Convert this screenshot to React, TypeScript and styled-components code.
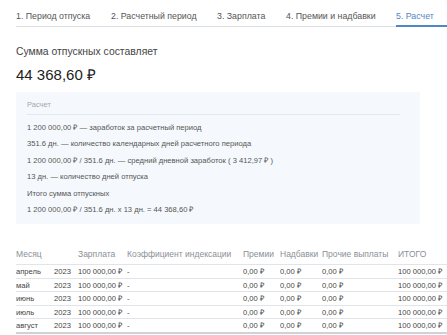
import React from "react";
import styled, { createGlobalStyle } from "styled-components";

const Global = createGlobalStyle`
  html, body { margin: 0; padding: 0; background: #fff; overflow: hidden; }
  body { font-family: "Liberation Sans", Arial, sans-serif; color: #444; }
`;

const Page = styled.div`
  width: 447px;
  height: 335px;
  overflow: hidden;
  padding-left: 16px;
  box-sizing: border-box;
`;

const Tabs = styled.div`
  display: flex;
  border-bottom: 1px solid #dcdfe3;
  width: 460px;
  padding-top: 11px;
`;

const Tab = styled.div<{ $active?: boolean; $w: number }>`
  width: ${(p) => p.$w}px;
  flex: none;
  font-size: 8.8px;
  line-height: 11px;
  padding-bottom: 3px;
  white-space: nowrap;
  color: ${(p) => (p.$active ? "#4f86c6" : "#555")};
  border-bottom: 2px solid ${(p) => (p.$active ? "#4f86c6" : "transparent")};
  margin-bottom: -1px;
`;

const Subtitle = styled.div`
  margin-top: 18px;
  font-size: 10.4px;
  line-height: 13px;
  color: #444;
`;

const Total = styled.div`
  margin-top: 7px;
  font-size: 15px;
  line-height: 19px;
  color: #222;
`;

const CalcBox = styled.div`
  margin-top: 8px;
  width: 404px;
  background: #f5f9fd;
  padding: 8px 20px 10px 11px;
  box-sizing: border-box;
`;

const CalcLabel = styled.div`
  font-size: 7.5px;
  line-height: 9px;
  color: #a4a8ad;
  padding-bottom: 5px;
  border-bottom: 1px solid #e3e8ee;
`;

const CalcLine = styled.div`
  font-size: 7.6px;
  line-height: 9px;
  color: #555;
  margin-top: 7.5px;
  white-space: nowrap;
  &:first-of-type { margin-top: 6px; }
`;

const Table = styled.table`
  margin-top: 25px;
  border-collapse: collapse;
  table-layout: fixed;
  width: 460px;
`;

const Th = styled.th`
  text-align: left;
  font-weight: normal;
  font-size: 8.5px;
  line-height: 10px;
  color: #8b9096;
  padding: 0 0 5px 0;
  white-space: nowrap;
`;

const Tr = styled.tr`
  border-top: 1px solid #e2e4e7;
  &:last-child { border-bottom: 2px solid #cfd2d6; }
`;

const Td = styled.td`
  font-size: 7.6px;
  line-height: 9px;
  color: #444;
  padding: 2px 0 1.5px 0;
  white-space: nowrap;
  overflow: hidden;
`;

const months = ["апрель", "май", "июнь", "июль", "август"];
const widths = [38, 24, 49, 116, 37, 42, 76, 78];

export default function App() {
  return (
    <>
      <Global />
      <Page>
        <Tabs>
          <Tab $w={95}>1. Период отпуска</Tab>
          <Tab $w={106}>2. Расчетный период</Tab>
          <Tab $w={69}>3. Зарплата</Tab>
          <Tab $w={110}>4. Премии и надбавки</Tab>
          <Tab $w={80} $active>5. Расчет</Tab>
        </Tabs>
        <Subtitle>Сумма отпускных составляет</Subtitle>
        <Total>44 368,60 ₽</Total>
        <CalcBox>
          <CalcLabel>Расчет</CalcLabel>
          <CalcLine>1 200 000,00 ₽ — заработок за расчетный период</CalcLine>
          <CalcLine>351.6 дн. — количество календарных дней расчетного периода</CalcLine>
          <CalcLine>1 200 000,00 ₽ / 351.6 дн. — средний дневной заработок ( 3 412,97 ₽ )</CalcLine>
          <CalcLine>13 дн. — количество дней отпуска</CalcLine>
          <CalcLine>Итого сумма отпускных</CalcLine>
          <CalcLine>1 200 000,00 ₽ / 351.6 дн. x 13 дн. = 44 368,60 ₽</CalcLine>
        </CalcBox>
        <Table>
          <colgroup>
            {widths.map((w, i) => (
              <col key={i} style={{ width: w }} />
            ))}
          </colgroup>
          <thead>
            <tr>
              <Th colSpan={2}>Месяц</Th>
              <Th>Зарплата</Th>
              <Th>Коэффициент индексации</Th>
              <Th>Премии</Th>
              <Th>Надбавки</Th>
              <Th>Прочие выплаты</Th>
              <Th>ИТОГО</Th>
            </tr>
          </thead>
          <tbody>
            {months.map((m) => (
              <Tr key={m}>
                <Td>{m}</Td>
                <Td>2023</Td>
                <Td>100 000,00 ₽</Td>
                <Td>-</Td>
                <Td>0,00 ₽</Td>
                <Td>0,00 ₽</Td>
                <Td>0,00 ₽</Td>
                <Td>100 000,00 ₽</Td>
              </Tr>
            ))}
          </tbody>
        </Table>
      </Page>
    </>
  );
}
